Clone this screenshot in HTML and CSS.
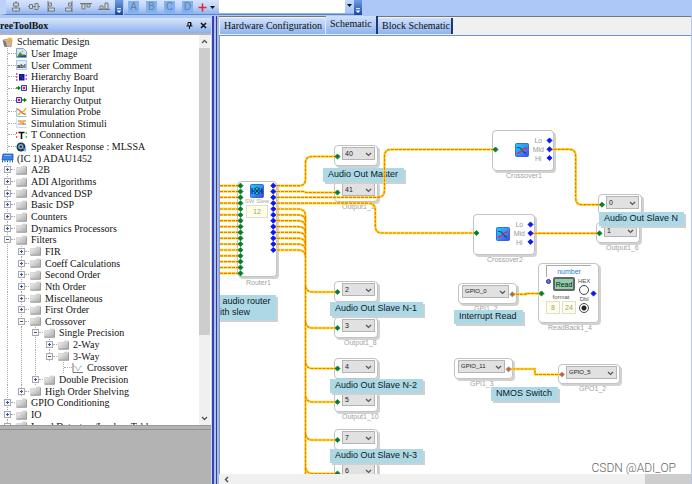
FILE: index.html
```html
<!DOCTYPE html>
<html lang="en">
<head>
<meta charset="utf-8">
<title>Schematic</title>
<link rel="stylesheet" href="styles.css">
</head>
<body>
<svg class="defs" aria-hidden="true">
  <defs>
    <linearGradient id="gf" x1="0" y1="0" x2="1" y2="1"><stop offset="0" stop-color="#f6f6f6"/><stop offset="1" stop-color="#a8a8a8"/></linearGradient>
    <linearGradient id="gb" x1="0" y1="0" x2="1" y2="1"><stop offset="0" stop-color="#08d8ff"/><stop offset=".5" stop-color="#2c96ff"/><stop offset="1" stop-color="#4a3cf4"/></linearGradient>
    <symbol id="folder" viewBox="0 0 11 10"><path d="M.5 2.500h5l1-1.500h4v8H.5z" fill="url(#gf)" stroke="#c6c6c6" stroke-width=".6"/><path d="M.5 9.200h10.200V2" fill="none" stroke="#8c8c8c" stroke-width=".9"/></symbol>
    <symbol id="design" viewBox="0 0 11 10"><path d="M1 3l5-1 4 1-1 7H3z" fill="#c9b9a8" stroke="#8d8074" stroke-width=".6"/><path d="M1 3l3 2 1 5-3-1z" fill="#777"/><path d="M5 5l4-4 1.500 1L7 6z" fill="#f0a020"/><circle cx="7.500" cy="2.500" r="2" fill="#f5b041"/></symbol>
    <symbol id="image" viewBox="0 0 11 10"><path d="M.5.5h7l3 3v6H.5z" fill="#d6e8f5" stroke="#6c8fae" stroke-width=".8"/><path d="M1 9l3-5 3 3 1-1 2.500 3z" fill="#3d8b3d"/><path d="M1 9h9V7L6 8z" fill="#26478e"/><circle cx="6.500" cy="3.500" r="1" fill="#e8b050"/></symbol>
    <symbol id="comment" viewBox="0 0 11 10"><path d="M.5.500h10v9H.5z" fill="#e2effa" stroke="#8ab4dc" stroke-width=".7"/><text x="1" y="7.500" font-family="Liberation Sans" font-size="6" font-weight="bold" fill="#222">abl</text></symbol>
    <symbol id="board" viewBox="0 0 11 10"><path d="M3 2h5.500v6.500H3z" fill="#0c1a9c"/><path d="M0 2h1.500M0 5h1.500M0 8h1.500M9.500 3.500H11M9.500 7H11" stroke="#d21cc8" stroke-width="1.500"/><path d="M4.500 4h1M6 6h1" stroke="#5d7de8"/></symbol>
    <symbol id="hin" viewBox="0 0 11 10"><path d="M0 5h3" stroke="#080" stroke-width="1.500"/><path d="M2 2.700L5 5 2 7.300z" fill="#080"/><path d="M5.500 2.500h5v5h-5z" fill="#dce" stroke="#3a38b8"/><path d="M7 4h2v2H7z" fill="#e02020"/></symbol>
    <symbol id="hout" viewBox="0 0 11 10"><path d="M6 5h3" stroke="#080" stroke-width="1.500"/><path d="M8 2.700L11 5 8 7.300z" fill="#080"/><path d="M.5 2.500h5v5h-5z" fill="#dce" stroke="#3a38b8"/><path d="M2 4h2v2H2z" fill="#e02020"/></symbol>
    <symbol id="probe" viewBox="0 0 11 10"><path d="M.7.500v9h10" fill="none" stroke="#67b7c4" stroke-width=".8"/><path d="M1 2c3 0 4 6 9 5" fill="none" stroke="#e04a20" stroke-width="1.200"/><path d="M2 8l3-3 3-1 2-3" fill="none" stroke="#e8a818" stroke-width="1.300"/></symbol>
    <symbol id="stim" viewBox="0 0 11 10"><path d="M.7.500v9h10" fill="none" stroke="#9ecdf0" stroke-width=".7"/><path d="M2 3h3v3h2V3h3" fill="none" stroke="#f0a030" stroke-width="1.500"/><path d="M2 6h2M7 6h3" stroke="#7070e0"/></symbol>
    <symbol id="tcon" viewBox="0 0 11 10"><path d="M2.500 2.500h6M5.500 2.500V9" stroke="#111" stroke-width="1.600"/><path d="M.7 2v2M.7 6v2" stroke="#e33"/><path d="M10.200 2v2M10.200 6v2" stroke="#2a2"/></symbol>
    <symbol id="spk" viewBox="0 0 11 10"><circle cx="5" cy="5" r="4.500" fill="#23384e"/><circle cx="4.800" cy="4.600" r="2.700" fill="#7fa9ce"/><circle cx="4.800" cy="4.600" r="1.200" fill="#1e3146"/><path d="M7 6l3.500 1-1.500 3z" fill="#58a4ee"/></symbol>
    <symbol id="chip" viewBox="0 0 13 10"><path d="M2 1h10v6H1z" fill="#3c84e6" stroke="#1c55ae" stroke-width=".8"/><path d="M1.500 7.300v2M4 7.300v2M6.500 7.300v2M9 7.300v2M11.500 7.300v2" stroke="#31589c"/><path d="M3 2.500h7" stroke="#88b8f6"/></symbol>
    <symbol id="xov" viewBox="0 0 11 10"><path d="M1 0v9.500h10" fill="none" stroke="#555" stroke-width=".8"/><path d="M2 3c3 0 3 5 4 5" fill="none" stroke="#ff8ca4"/><path d="M6 8c1 0 1-5 4-5" fill="none" stroke="#60d5d8"/></symbol>
    <symbol id="cross" viewBox="0 0 14 14"><rect x=".5" y=".5" width="13" height="13" rx="1" fill="url(#gb)" stroke="#2c4bd0" stroke-width=".8"/><path d="M2 4.500h2c3 0 3 5.500 7 5.500" fill="none" stroke="#244" stroke-width="1.200"/><path d="M2 10h1c4 0 3-5 8-5h1" fill="none" stroke="#e22c3c" stroke-width="1.300"/></symbol>
    <symbol id="chev" viewBox="0 0 7 5"><path d="M1 1l2.500 2.500L6 1" fill="none" stroke="#555" stroke-width="1.200"/></symbol>
  </defs>
</svg>

<header class="bars">
  <div class="bar align">
    <button aria-label="Align centers"><svg viewBox="0 0 12 12"><path d="M6 0v11" stroke="#777"/><path d="M3.500 2h5v3h-5zM2.500 7h7v3h-7z" fill="#ccd6e6" stroke="#777"/></svg></button>
    <button aria-label="Align middles"><svg viewBox="0 0 12 12"><path d="M0 5.500h12" stroke="#777"/><path d="M1.500 3.500h3v4h-3zM7 2.500h3v6H7z" fill="#ccd6e6" stroke="#777"/></svg></button>
    <button aria-label="Align lefts"><svg viewBox="0 0 12 12"><path d="M3 0v11" stroke="#777"/><path d="M3.500 2h3v3h-3zM3.500 7h6v3h-6z" fill="#ccd6e6" stroke="#777"/></svg></button>
    <button aria-label="Align rights"><svg viewBox="0 0 12 12"><path d="M9 0v11" stroke="#777"/><path d="M5.500 2h3v3h-3zM2.500 7h6v3h-6z" fill="#ccd6e6" stroke="#777"/></svg></button>
    <button aria-label="Align tops"><svg viewBox="0 0 12 12"><path d="M0 2.500h12" stroke="#777"/><path d="M2 3h3v5H2zM7 3h3v3H7z" fill="#ccd6e6" stroke="#777"/></svg></button>
    <button aria-label="Align bottoms"><svg viewBox="0 0 12 12"><path d="M0 8.500h12" stroke="#777"/><path d="M2 5h3v3H2zM7 2h3v6H7z" fill="#ccd6e6" stroke="#777"/></svg></button>
  </div>
  <button class="more" aria-label="More align tools"><svg viewBox="0 0 8 6"><path d="M2 .7h4" stroke="#fff"/><path d="M1.500 2.500h5L4 5z" fill="#fff"/></svg></button>
  <div class="bar views">
    <button class="key">A</button><button class="key">B</button><button class="key">C</button><button class="key">D</button>
    <button class="plus" aria-label="Add view"><svg viewBox="0 0 9 9"><path d="M4.500.500v8M.5 4.500h8" stroke="#e8262c" stroke-width="1.500"/></svg></button>
    <button class="drop" aria-label="View list"><svg viewBox="0 0 5 3"><path d="M0 0h5L2.500 3z" fill="#111"/></svg></button>
    <div class="combo"><select aria-label="Project view"><option></option></select><svg viewBox="0 0 5 3"><path d="M0 0h5L2.500 3z" fill="#111"/></svg></div>
  </div>
  <button class="more" aria-label="More view tools"><svg viewBox="0 0 8 6"><path d="M2 .7h4" stroke="#fff"/><path d="M1.500 2.500h5L4 5z" fill="#fff"/></svg></button>
</header>

<main>
  <aside>
    <div class="title"><h2>reeToolBox</h2>
      <button aria-label="Pin"><svg viewBox="0 0 7 7"><path d="M2 .5h3v3.500M2 .5V4M.5 4h6M3.500 4v3" fill="none" stroke="#111"/><path d="M4.500.500V4" stroke="#111"/></svg></button>
      <button aria-label="Close"><svg viewBox="0 0 7 7"><path d="M1 1l5 5M6 1L1 6" stroke="#111" stroke-width="1.500"/></svg></button>
    </div>
    <div class="pane">
      <ul class="tree">
        <li class="d0"><svg><use href="#design"/></svg>Schematic Design</li>
        <li class="d1 leaf"><i></i><svg><use href="#image"/></svg>User Image</li>
        <li class="d1 leaf"><i></i><svg><use href="#comment"/></svg>User Comment</li>
        <li class="d1 leaf"><i></i><svg><use href="#board"/></svg>Hierarchy Board</li>
        <li class="d1 leaf"><i></i><svg><use href="#hin"/></svg>Hierarchy Input</li>
        <li class="d1 leaf"><i></i><svg><use href="#hout"/></svg>Hierarchy Output</li>
        <li class="d1 leaf"><i></i><svg><use href="#probe"/></svg>Simulation Probe</li>
        <li class="d1 leaf"><i></i><svg><use href="#stim"/></svg>Simulation Stimuli</li>
        <li class="d1 leaf"><i></i><svg><use href="#tcon"/></svg>T Connection</li>
        <li class="d1 leaf"><i></i><svg><use href="#spk"/></svg>Speaker Response : MLSSA</li>
        <li class="d0 ic"><svg><use href="#chip"/></svg>(IC 1) ADAU1452</li>
        <li class="d1"><button aria-label="Expand"></button><svg><use href="#folder"/></svg>A2B</li>
        <li class="d1"><button aria-label="Expand"></button><svg><use href="#folder"/></svg>ADI Algorithms</li>
        <li class="d1"><button aria-label="Expand"></button><svg><use href="#folder"/></svg>Advanced DSP</li>
        <li class="d1"><button aria-label="Expand"></button><svg><use href="#folder"/></svg>Basic DSP</li>
        <li class="d1"><button aria-label="Expand"></button><svg><use href="#folder"/></svg>Counters</li>
        <li class="d1"><button aria-label="Expand"></button><svg><use href="#folder"/></svg>Dynamics Processors</li>
        <li class="d1"><button class="open" aria-label="Collapse"></button><svg><use href="#folder"/></svg>Filters</li>
        <li class="d2"><button aria-label="Expand"></button><svg><use href="#folder"/></svg>FIR</li>
        <li class="d2"><button aria-label="Expand"></button><svg><use href="#folder"/></svg>Coeff Calculations</li>
        <li class="d2"><button aria-label="Expand"></button><svg><use href="#folder"/></svg>Second Order</li>
        <li class="d2"><button aria-label="Expand"></button><svg><use href="#folder"/></svg>Nth Order</li>
        <li class="d2"><button aria-label="Expand"></button><svg><use href="#folder"/></svg>Miscellaneous</li>
        <li class="d2"><button aria-label="Expand"></button><svg><use href="#folder"/></svg>First Order</li>
        <li class="d2"><button class="open" aria-label="Collapse"></button><svg><use href="#folder"/></svg>Crossover</li>
        <li class="d3"><button class="open" aria-label="Collapse"></button><svg><use href="#folder"/></svg>Single Precision</li>
        <li class="d4"><button aria-label="Expand"></button><svg><use href="#folder"/></svg>2-Way</li>
        <li class="d4"><button class="open" aria-label="Collapse"></button><svg><use href="#folder"/></svg>3-Way</li>
        <li class="d5 leaf"><i></i><svg><use href="#xov"/></svg>Crossover</li>
        <li class="d3"><button aria-label="Expand"></button><svg><use href="#folder"/></svg>Double Precision</li>
        <li class="d2"><button aria-label="Expand"></button><svg><use href="#folder"/></svg>High Order Shelving</li>
        <li class="d1"><button aria-label="Expand"></button><svg><use href="#folder"/></svg>GPIO Conditioning</li>
        <li class="d1"><button aria-label="Expand"></button><svg><use href="#folder"/></svg>IO</li>
        <li class="d1"><button aria-label="Expand"></button><svg><use href="#folder"/></svg>Level Detectors/Lookup Tables</li>
      </ul>
      <div class="vscroll">
        <button aria-label="Scroll up"><svg viewBox="0 0 7 5"><path d="M1 4l2.500-2.500L6 4" fill="none" stroke="#555" stroke-width="1.300"/></svg></button>
        <div class="thumb"></div>
        <button aria-label="Scroll down"><svg viewBox="0 0 7 5"><path d="M1 1l2.500 2.500L6 1" fill="none" stroke="#555" stroke-width="1.300"/></svg></button>
      </div>
    </div>
    <div class="empty"></div>
  </aside>
  <div class="splitter"></div>
  <section class="editor">
    <nav class="tabs"><a href="#hw">Hardware Configuration</a><a href="#sch" class="on">Schematic</a><a href="#blk">Block Schematic</a></nav>
    <div class="canvas">
      <div class="node out" style="left:114px;top:109px"><select aria-label="Output 40"><option>40</option></select><svg class="chev"><use href="#chev"/></svg></div>
      <div class="node out" style="left:114px;top:145px"><select aria-label="Output 41"><option>41</option></select><svg class="chev"><use href="#chev"/></svg></div>
      <div class="node out" style="left:114px;top:245px"><select aria-label="Output 2"><option>2</option></select><svg class="chev"><use href="#chev"/></svg></div>
      <div class="node out" style="left:114px;top:281px"><select aria-label="Output 3"><option>3</option></select><svg class="chev"><use href="#chev"/></svg></div>
      <div class="node out" style="left:114px;top:322px"><select aria-label="Output 4"><option>4</option></select><svg class="chev"><use href="#chev"/></svg></div>
      <div class="node out" style="left:114px;top:355px"><select aria-label="Output 5"><option>5</option></select><svg class="chev"><use href="#chev"/></svg></div>
      <div class="node out" style="left:114px;top:393px"><select aria-label="Output 7"><option>7</option></select><svg class="chev"><use href="#chev"/></svg></div>
      <div class="node out" style="left:114px;top:426px"><select aria-label="Output 6"><option>6</option></select><svg class="chev"><use href="#chev"/></svg></div>
      <div class="node out" style="left:378px;top:158px"><select aria-label="Output 0"><option>0</option></select><svg class="chev"><use href="#chev"/></svg></div>
      <div class="node out" style="left:376px;top:186px"><select aria-label="Output 1"><option>1</option></select><svg class="chev"><use href="#chev"/></svg></div>
      <div class="node gpi" style="left:238px;top:247px"><select aria-label="GPI1_2"><option>GPIO_0</option></select><svg class="chev"><use href="#chev"/></svg></div>
      <div class="node gpi" style="left:234px;top:322px"><select aria-label="GPI1_3"><option>GPIO_11</option></select><svg class="chev"><use href="#chev"/></svg></div>
      <div class="node gpo" style="left:338px;top:328px"><select aria-label="GPO1_2"><option>GPIO_5</option></select><svg class="chev"><use href="#chev"/></svg></div>

      <div class="node router" style="left:17px;top:145px">
        <svg class="ico" viewBox="0 0 14 14"><rect x=".5" y=".5" width="13" height="13" rx="1" fill="url(#gb)" stroke="#2c4bd0" stroke-width=".8"/><path d="M5 4.500L7 3l2 1.500v5L7 11 5 9.500z" fill="#18d0b0" stroke="#0a5c70" stroke-width=".9"/><path d="M2 4v6M2 7h2.500M12 4v6M12 7H9.500M4.500 4l5 6M9.500 4l-5 6" stroke="#0d1f6a" stroke-width="1"/></svg>
        <label for="slew">SW Slew</label><input id="slew" value="12">
      </div>
      <div class="node xo" style="left:272px;top:94px"><svg class="ico"><use href="#cross"/></svg><div class="bands"><span>Lo</span><span>Mid</span><span>Hi</span></div></div>
      <div class="node xo" style="left:253px;top:178px"><svg class="ico"><use href="#cross"/></svg><div class="bands"><span>Lo</span><span>Mid</span><span>Hi</span></div></div>
      <div class="node readback" style="left:318px;top:227px">
        <div class="name">number</div>
        <div class="cols">
          <div class="fmt"><div class="act"><b class="led"></b><button>Read</button></div><span>format</span><div class="pair"><input aria-label="Integer bits" value="8"><input aria-label="Fraction bits" value="24"></div></div>
          <div class="modes"><label for="hex">HEX</label><input type="radio" name="m" id="hex"><label for="dbl">Dbl</label><input type="radio" name="m" id="dbl" checked></div>
        </div>
      </div>

      <span class="cap" style="left:122px;top:167px">Output1_1</span>
      <span class="cap" style="left:124px;top:303px">Output1_8</span>
      <span class="cap" style="left:122px;top:377px">Output1_10</span>
      <span class="cap" style="left:386px;top:208px">Output1_6</span>
      <span class="cap" style="left:26px;top:243px">Router1</span>
      <span class="cap" style="left:286px;top:136px">Crossover1</span>
      <span class="cap" style="left:267px;top:220px">Crossover2</span>
      <span class="cap" style="left:328px;top:288px">ReadBack1_4</span>
      <span class="cap" style="left:254px;top:269px">GPI1_2</span>
      <span class="cap" style="left:250px;top:344px">GPI1_3</span>
      <span class="cap" style="left:359px;top:349px">GPO1_2</span>

      <div class="note" style="left:103px;top:132px">Audio Out Master</div>
      <div class="note" style="left:110px;top:266px">Audio Out Slave N-1</div>
      <div class="note" style="left:110px;top:343px">Audio Out Slave N-2</div>
      <div class="note" style="left:110px;top:413px">Audio Out Slave N-3</div>
      <div class="note" style="left:379px;top:176px">Audio Out Slave N</div>
      <div class="note" style="left:234px;top:274px">Interrupt Read</div>
      <div class="note" style="left:271px;top:351px">NMOS Switch</div>
      <div class="note two" style="left:-3px;top:259px">&nbsp;audio router<br>ith slew</div>

      <svg class="wires" viewBox="220 36 480 438" aria-hidden="true">
        <defs>
          <g id="w">
            <path d="M220 185.700h21M220 191.500h21M220 197.400h21M220 203.200h21M220 209h21M220 214.900h21M220 220.700h21M220 226.600h21M220 232.400h21M220 238.300h21M220 244.100h21M220 250h21M220 255.800h21M220 261.600h21M220 267.500h21M220 273.300h21"/>
            <path d="M273 185.700h26q6.500 0 6.500-6.700V163q0-6.500 6.500-6.500h25M273 191.500h31l2 1h31M273 197.400h104q7.500 0 7.500-7.400v-34q0-6.500 6.500-6.500h104M273 203.200h95q7.300 0 7.300 6.800v16q0 7 6.700 7h95"/>
            <path d="M273 209h25q7.500 0 7.500 7V474M273 214.900h25q7.500 0 7.500 7M273 220.700h25q7.500 0 7.500 7M273 226.600h25q7.500 0 7.500 7M273 232.400h25q7.500 0 7.500 7M273 238.300h25q7.500 0 7.500 7M273 244.100h25q7.500 0 7.500 7M273 250h25q7.500 0 7.500 7"/>
            <path d="M305.500 286q1 6 7 6h25M305.500 322q1 6 7 6h25M305.500 362.500q1 6 7 6h25M305.500 396q1 6 7 6h25M305.500 434q1 6 7 6h25M305.500 467.500q1 6 7 6h25"/>
            <path d="M549.500 149.300H569q6.700 0 6.700 6.700v42q0 6.700 6.300 6.700h20M530.500 233.300h69M512 294.300h14v-.8h15M508.500 369H535v5.500h27"/>
          </g>
          <path id="p" d="M-2.600 0L0-2.600 2.600 0 0 2.600z" stroke-width=".8"/>
        </defs>
        <use href="#w" class="base"/><use href="#w" class="dash"/>
        <g class="green">
          <use href="#p" x="240.500" y="185.700"/><use href="#p" x="240.500" y="191.500"/><use href="#p" x="240.500" y="197.400"/><use href="#p" x="240.500" y="203.200"/><use href="#p" x="240.500" y="209"/><use href="#p" x="240.500" y="214.900"/><use href="#p" x="240.500" y="220.700"/><use href="#p" x="240.500" y="226.600"/><use href="#p" x="240.500" y="232.400"/><use href="#p" x="240.500" y="238.300"/><use href="#p" x="240.500" y="244.100"/><use href="#p" x="240.500" y="250"/><use href="#p" x="240.500" y="255.800"/><use href="#p" x="240.500" y="261.600"/><use href="#p" x="240.500" y="267.500"/><use href="#p" x="240.500" y="273.300"/>
          <use href="#p" x="337.500" y="156.500"/><use href="#p" x="337.500" y="192.500"/><use href="#p" x="337.500" y="292"/><use href="#p" x="337.500" y="328"/><use href="#p" x="337.500" y="368.500"/><use href="#p" x="337.500" y="402"/><use href="#p" x="337.500" y="440"/><use href="#p" x="337.500" y="473.500"/>
          <use href="#p" x="495.500" y="149.500"/><use href="#p" x="476.500" y="233"/><use href="#p" x="602" y="204.700"/><use href="#p" x="599.500" y="233.300"/><use href="#p" x="541.500" y="293.500"/>
        </g>
        <g class="blue">
          <use href="#p" x="273.300" y="185.700"/><use href="#p" x="273.300" y="191.500"/><use href="#p" x="273.300" y="197.400"/><use href="#p" x="273.300" y="203.200"/><use href="#p" x="273.300" y="209"/><use href="#p" x="273.300" y="214.900"/><use href="#p" x="273.300" y="220.700"/><use href="#p" x="273.300" y="226.600"/><use href="#p" x="273.300" y="232.400"/><use href="#p" x="273.300" y="238.300"/><use href="#p" x="273.300" y="244.100"/><use href="#p" x="273.300" y="250"/>
          <use href="#p" x="549.500" y="140.500"/><use href="#p" x="549.500" y="149.300"/><use href="#p" x="549.500" y="158"/><use href="#p" x="530.500" y="224.500"/><use href="#p" x="530.500" y="233.300"/><use href="#p" x="530.500" y="241.800"/><use href="#p" x="593.500" y="293.500"/>
        </g>
        <g class="red"><use href="#p" x="512.300" y="294.300"/><use href="#p" x="508.500" y="369.300"/><use href="#p" x="562" y="374.500"/></g>
      </svg>
      <div class="mark">CSDN @ADI_OP</div>
    </div>
    <div class="hscroll"><button aria-label="Scroll left"><svg viewBox="0 0 5 7"><path d="M4 1L1.500 3.500 4 6" fill="none" stroke="#444" stroke-width="1.300"/></svg></button><div class="thumb"></div></div>
  </section>
</main>
</body>
</html>
```
FILE: styles.css
```css
* { box-sizing: border-box; }
body {
  margin: 0; height: 100vh; overflow: hidden;
  display: flex; flex-direction: column;
  background: #adc8f7; color: #111;
  font: 10px/12px "Liberation Serif", serif;
}
button, select, input { margin: 0; padding: 0; border: 0; background: none; font: inherit; color: inherit; appearance: none; border-radius: 0; }
svg { display: block; flex: none; }
.defs { position: absolute; width: 0; height: 0; }

/* toolbars */
.bars { flex: none; display: flex; height: 16px; }
.bar { display: flex; align-items: center; height: 15px; background: linear-gradient(#d6e5fc, #bdd3f8 50%, #8db2ee); border-bottom: 1px solid #5c87cc; }
.align { width: 115px; justify-content: space-between; border-left: 6px solid #bcd2f7; padding: 0 5px 0 4px; }
.align button { width: 12px; height: 12px; }
.align svg { width: 12px; height: 12px; }
.more { width: 8px; height: 15px; background: linear-gradient(#6f9ce6, #1b479e); display: flex; align-items: end; justify-content: center; padding-bottom: 1px; }
.more svg { width: 8px; height: 6px; }
.views { margin-left: 1px; padding-left: 4px; width: 230px; }
.key { width: 11px; height: 12px; margin-right: 7px; background: #7fb2f3; color: #6d7d92; font: 10px/12px "Liberation Sans", sans-serif; }
.plus svg { width: 9px; height: 9px; }
.plus { margin-left: -2px; }
.drop { margin-left: 3px; }
.drop svg, .combo svg { width: 5px; height: 3px; }
.combo { margin-left: 4px; flex: 1; height: 14px; align-self: start; position: relative; border-bottom: 1px solid #8fb0e4; }
.combo select { width: 100%; height: 13px; background: linear-gradient(#c6dafa, #a6c5f4) right / 9px 100% no-repeat #fff; }
.combo svg { position: absolute; right: 2px; top: 4px; pointer-events: none; }

main { flex: 1; min-height: 0; display: flex; padding-right: 1px; }
aside { width: 211px; flex: none; display: flex; flex-direction: column; padding-top: 2px; }
.title { flex: none; height: 15px; display: flex; align-items: center; gap: 7px; padding-right: 4px; background: linear-gradient(#d6e5fc, #b3ccf5 50%, #8cb1ed); }
.title h2 { margin: 0; flex: 1; font-size: 10px; line-height: 13px; }
.title button, .title svg { width: 7px; height: 7px; }
.pane { flex: none; height: 393px; overflow: hidden; display: flex; background: #fff; border-top: 2px solid #b5b5b5; border-bottom: 1px solid #999; }
.tree { flex: 1; height: 397px; margin: 0; padding: 1px 0 0; list-style: none; display: grid; grid-auto-rows: 1fr; }
.tree li { display: flex; align-items: center; min-height: 0; line-height: 11px; white-space: nowrap; background-repeat: no-repeat; background-size: 1px 100%; }
.tree svg { width: 11px; height: 10px; margin-right: 4px; }
.tree .ic svg { width: 13px; margin-right: 3px; }
.tree button { position: relative; width: 7px; height: 7px; margin-right: 5px; border: 1px solid #a9a9a9; background: linear-gradient(#3458a8, #3458a8) center / 3px 1px no-repeat, linear-gradient(#3458a8, #3458a8) center / 1px 3px no-repeat #f8f8f8; }
.tree button.open { background: linear-gradient(#3458a8, #3458a8) center / 3px 1px no-repeat #f8f8f8; }
.tree button::after { content: ""; position: absolute; left: 6px; top: 2px; width: 4px; border-top: 1px dotted #aaa; }
.tree i { width: 8px; margin: 0 0 0 4px; border-top: 1px dotted #aaa; }
.d0 { padding-left: 2px; }
.d1, .d2, .d3, .d4, .d5 {
  --g: repeating-linear-gradient(#aaa 0 1px, #fff 1px 2px);
  padding-left: 4px; background-image: var(--g); background-position: 7px 0;
}
.tree .d0.ic { padding-left: 1px; }
.d2 { padding-left: 18px; background-image: var(--g), var(--g); background-position: 7px 0, 21px 0; }
.d3 { padding-left: 32px; background-image: var(--g), var(--g), var(--g); background-position: 7px 0, 21px 0, 35px 0; }
.d4, .d5 { padding-left: 46px; background-image: var(--g), var(--g), var(--g), var(--g); background-position: 7px 0, 21px 0, 35px 0, 49px 0; }
.d5 { padding-left: 60px; background-position: 7px 0, 21px 0, 35px 0, 63px 0; }
.vscroll { width: 11px; margin-right: 1px; display: flex; flex-direction: column; background: #f0f0f0; }
.vscroll button { height: 13px; padding: 4px 2px; }
.vscroll svg { width: 7px; height: 5px; }
.vscroll .thumb { height: 287px; margin-bottom: auto; background: #cdcdcd; }
.empty { flex: 1; margin-top: 3px; background: #b3b3b3; border-top: 1px solid #919191; box-shadow: 0 -3px #b3b3b3; }
.splitter { flex: none; width: 8px; background: linear-gradient(90deg, #c5d8f8 0 1px, #3a40b0 1px 3px, #a8c2f4 3px 5px, #38398f 5px 6px, #a9bbdc 6px 8px); }

/* editor */
.editor { flex: 1; min-width: 0; display: flex; flex-direction: column; border-top: 1px solid #777; background: #f0f0f0; }
.tabs { flex: none; height: 19px; display: flex; align-items: end; padding: 0 0 1px 1px; border-bottom: 1px solid #6d93d2; background: #f0f0f0; }
.tabs a { height: 16px; padding: 1px 4px 0; display: block; line-height: 13px; white-space: nowrap; color: #111; text-decoration: none; background: linear-gradient(#d0e1fb, #8fb4ee); border-right: 1px solid #dce8fb; }
.tabs a:first-child { width: 106px; }
.tabs a.on { height: 18px; width: 52px; border-right: 2px solid #173a7c; }
.tabs a:last-child { width: 75px; border-right: 2px solid #173a7c; }
.canvas { flex: 1; min-height: 0; position: relative; overflow: hidden; background: #fff; border-left: 1px solid #7d9ccb; font: 7px/8px "Liberation Sans", sans-serif; }
.hscroll { flex: none; height: 10px; display: flex; align-items: center; justify-content: space-between; padding-left: 5px; background: #f0f0f0; }
.hscroll svg { width: 5px; height: 7px; }
.hscroll .thumb { width: 46px; height: 10px; background: #cdcdcd; }

/* schematic items */
.node { position: absolute; background: #fff; border: 1px solid #c3c3c3; border-radius: 4px; box-shadow: 2px 2px #d2d2d2; }
.out { width: 44px; height: 21px; padding: 1px 2px 0 7px; }
.gpi { width: 59px; height: 21px; padding: 1px 7px 0 3px; }
.gpo { width: 62px; height: 20px; padding: 1px 2px 0 7px; }
.node select { display: block; width: 100%; height: 13px; padding-left: 2px; background: #e1e1e1; border: 1px solid #b4b4b4; font: 7px/9px "Liberation Sans", sans-serif; color: #222; }
.node.gpi select, .node.gpo select { font-size: 6px; }
.chev { position: absolute; right: 5px; top: 6px; width: 7px; height: 5px; pointer-events: none; }
.gpi .chev { right: 10px; }
.router { width: 40px; height: 96px; display: flex; flex-direction: column; align-items: center; padding-top: 2px; color: #aaa; }
.ico { width: 14px; height: 14px; }
.router label { line-height: 7px; font-size: 6px; white-space: nowrap; }
.node input:not([type]) { width: 14px; height: 13px; text-align: center; background: #ffffe1; border: 1px solid #ddd; color: #999; }
.router input:not([type]) { width: 22px; }
.xo { width: 62px; height: 41px; display: flex; align-items: center; justify-content: end; gap: 4px; padding-right: 9px; color: #999; }
.xo .ico { margin-bottom: 2px; }
.bands { display: grid; gap: 1px; text-align: center; margin-bottom: 2px; }
.readback { width: 61px; height: 60px; padding: 1px 7px 0; }
.name { height: 12px; line-height: 11px; text-align: center; color: #1c7fd6; border: solid #aaa; border-width: 1px 0 0 1px; }
.cols { display: flex; gap: 2px; color: #555; }
.act { display: flex; gap: 2px; height: 16px; }
.led { width: 5px; height: 5px; margin-top: 2px; border-radius: 50%; background: #6676dc; border: 1px solid #24309c; }
.act button { width: 22px; height: 14px; background: #8fd0ac; border: 2px solid #666; border-radius: 2px; color: #111; line-height: 9px; }
.fmt span { display: block; text-align: center; line-height: 8px; font-size: 6px; }
.pair { display: flex; gap: 2px; }
.modes { display: flex; flex-direction: column; align-items: center; font-size: 6px; }
.modes label { height: 8px; }
.modes input { width: 10px; height: 10px; border: 1px solid #444; border-radius: 50%; background: #fff; }
.modes input:checked { background: radial-gradient(#222 0 2px, #fff 3px); }
.cap { position: absolute; color: #a2a2a2; white-space: nowrap; }
.note { position: absolute; padding: 0 6px 0 5px; height: 14px; line-height: 13px; font-size: 9px; white-space: nowrap; background: #add8e6; color: #10191d; box-shadow: 2px 2px #d0d0d0; }
.two { height: auto; line-height: 11px; padding: 1px 5px 2px 3px; }
.wires { position: absolute; left: 0; top: 0; width: 480px; height: 438px; pointer-events: none; }
.base { fill: none; stroke: #ffe030; stroke-width: 2.4; }
.dash { fill: none; stroke: #f07800; stroke-width: 1.2; stroke-dasharray: 3 1; }
.green { fill: #087a2c; stroke: #128a4a; }
.blue { fill: #0a14ff; stroke: #0a14ff; }
.red { fill: #e8503c; stroke: #5cc0a8; }
.mark { position: absolute; right: 15px; bottom: -1px; font: 300 12px/14px Roboto, sans-serif; color: #666; }
```
